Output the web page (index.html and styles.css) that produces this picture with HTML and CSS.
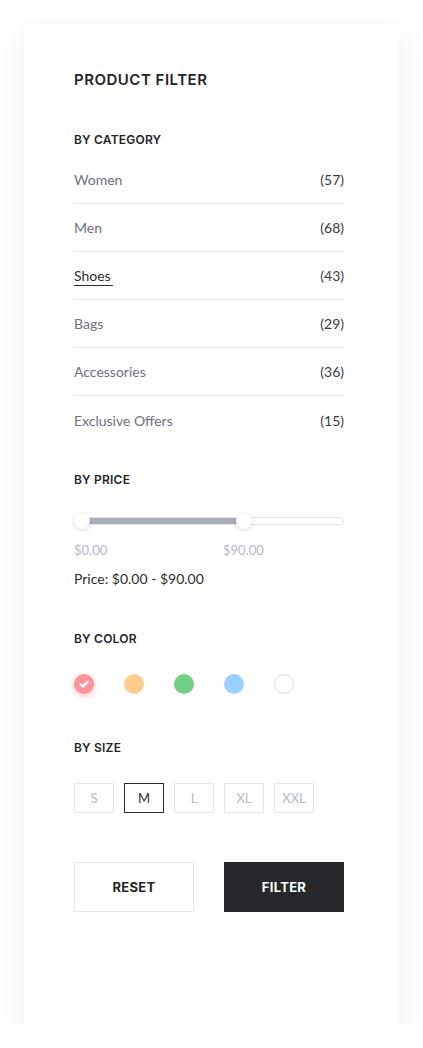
FILE: index.html
```html
<!DOCTYPE html>
<html lang="en">
<head>
  <meta charset="UTF-8">
  <meta name="viewport" content="width=device-width, initial-scale=1.0">
  <title>Product Filter</title>
  <link rel="stylesheet" href="styles.css">
</head>
<body>
<div class="card">
  <h2 class="title">PRODUCT FILTER</h2>

  <div class="block cat-block">
    <h3 class="label">BY CATEGORY</h3>
    <ul class="cats">
      <li><span class="name">Women</span><span class="count">(57)</span></li>
      <li><span class="name">Men</span><span class="count">(68)</span></li>
      <li><span class="name active">Shoes</span><span class="count">(43)</span></li>
      <li><span class="name">Bags</span><span class="count">(29)</span></li>
      <li><span class="name">Accessories</span><span class="count">(36)</span></li>
      <li><span class="name">Exclusive Offers</span><span class="count">(15)</span></li>
    </ul>
  </div>

  <div class="block price-block">
    <h3 class="label">BY PRICE</h3>
    <div class="slider">
      <div class="fill"></div>
      <span class="thumb left"></span>
      <span class="thumb right"></span>
    </div>
    <div class="range">
      <span class="min">$0.00</span>
      <span class="max">$90.00</span>
    </div>
    <div class="price">Price: $0.00 - $90.00</div>
  </div>

  <div class="block color-block">
    <h3 class="label">BY COLOR</h3>
    <div class="colors">
      <span class="dot pink checked">
        <svg width="12" height="12" viewBox="0 0 12 12"><path d="M2.6 6.4 L5 8.6 L9.4 3.9" fill="none" stroke="#fff" stroke-width="2.4" stroke-linecap="round" stroke-linejoin="round"/></svg>
      </span>
      <span class="dot orange"></span>
      <span class="dot green"></span>
      <span class="dot blue"></span>
      <span class="dot white"></span>
    </div>
  </div>

  <div class="block size-block">
    <h3 class="label">BY SIZE</h3>
    <div class="sizes">
      <span class="size">S</span>
      <span class="size on">M</span>
      <span class="size">L</span>
      <span class="size">XL</span>
      <span class="size">XXL</span>
    </div>
  </div>

  <div class="buttons">
    <button class="btn reset">RESET</button>
    <button class="btn go">FILTER</button>
  </div>
</div>
</body>
</html>
```

FILE: styles.css
```css
body {
  margin: 0;
  background: #ffffff;
  font-family: "Lato", "Open Sans", sans-serif;
}

.card {
  width: 375px;
  height: 1000px;
  margin: 24px 0 0 24px;
  padding: 46px 55px 0 50px;
  box-sizing: border-box;
  background: #ffffff;
  box-shadow: 0 10px 30px rgba(0, 0, 0, 0.08);
}

.title {
  margin: 0;
  font-family: "Inter", sans-serif;
  font-size: 15px;
  font-weight: 600;
  letter-spacing: 0.5px;
  line-height: 20px;
  color: #232428;
}

.label {
  margin: 0;
  font-family: "Inter", sans-serif;
  font-size: 12px;
  font-weight: 600;
  letter-spacing: 0.2px;
  line-height: 20px;
  color: #232428;
}

.cat-block { margin-top: 40px; }
.price-block { margin-top: 26px; }
.color-block { margin-top: 41px; }
.size-block { margin-top: 44px; }

.cats {
  list-style: none;
  margin: 6px 0 0;
  padding: 0;
}
.cats li {
  display: flex;
  justify-content: space-between;
  align-items: center;
  height: 48px;
  box-sizing: border-box;
  border-bottom: 1px solid #ececef;
  font-size: 14px;
}
.cats li:last-child {
  border-bottom: none;
}
.cats .name {
  color: #6f7080;
}
.cats .name.active {
  color: #2b2c31;
  border-bottom: 1px solid #2b2c31;
  padding: 0 2px 1px 0;
  margin-top: 2px;
}
.cats .count {
  color: #3a3b40;
}

.slider {
  position: relative;
  height: 8px;
  margin-top: 27px;
  box-sizing: border-box;
  border: 1px solid #e3e4ea;
  border-radius: 4px;
}
.fill {
  width: 164px;
  height: 100%;
  margin-left: 6px;
  background: #a9aebd;
}
.thumb {
  position: absolute;
  top: 50%;
  width: 16px;
  height: 16px;
  margin-top: -8px;
  border-radius: 50%;
  background: #ffffff;
  box-shadow: 0 1px 4px rgba(0, 0, 0, 0.16);
}
.thumb.left { left: -1px; }
.thumb.right { left: 161px; }

.range {
  display: flex;
  margin-top: 16px;
  font-size: 13px;
  line-height: 18px;
  color: #b5b8c8;
}
.range .min {
  width: 149px;
}

.price {
  margin-top: 11px;
  font-size: 14px;
  line-height: 18px;
  color: #2b2c31;
}

.colors {
  display: flex;
  gap: 30px;
  margin-top: 25px;
}
.dot {
  display: flex;
  align-items: center;
  justify-content: center;
  width: 20px;
  height: 20px;
  border-radius: 50%;
  box-sizing: border-box;
}
.pink { background: #ff939c; box-shadow: 0 2px 6px rgba(255, 120, 130, 0.45); }
.orange { background: #ffcc8f; }
.green { background: #72d086; }
.blue { background: #9ad0ff; }
.white { background: #ffffff; border: 1px solid #dcdde3; }

.sizes {
  display: flex;
  gap: 10px;
  margin-top: 25px;
}
.size {
  display: flex;
  align-items: center;
  justify-content: center;
  width: 40px;
  height: 30px;
  box-sizing: border-box;
  border: 1px solid #e6e7ec;
  font-size: 13px;
  color: #b5b8c8;
}
.size.on {
  border-color: #2b2c31;
  color: #2b2c31;
}

.buttons {
  display: flex;
  justify-content: space-between;
  margin-top: 49px;
}
.btn {
  width: 120px;
  height: 50px;
  font-family: "Inter", sans-serif;
  font-size: 13px;
  font-weight: 700;
  letter-spacing: 0.3px;
  cursor: pointer;
}
.reset {
  background: #ffffff;
  border: 1px solid #e6e7ec;
  color: #232428;
}
.go {
  background: #27282c;
  border: none;
  color: #ffffff;
}
```
